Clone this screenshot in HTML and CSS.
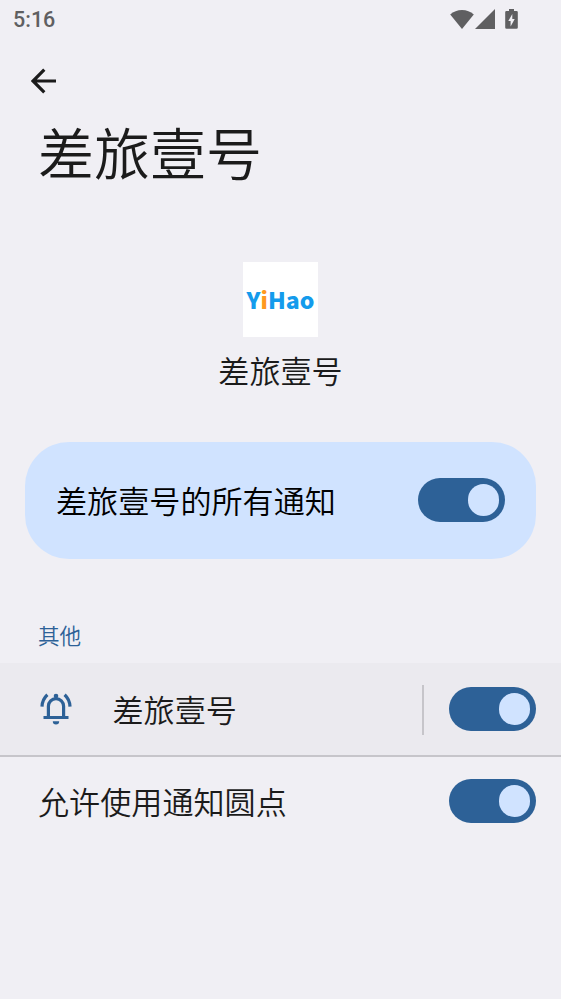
FILE: index.html
```html
<!DOCTYPE html>
<html lang="zh-CN">
<head>
    <meta charset="UTF-8">
    <meta name="viewport" content="width=device-width, initial-scale=1.0">
    <title>差旅壹号</title>
    <link rel="stylesheet" href="styles.css">
</head>
<body>

    <div class="status-bar">
        <span class="clock">5:16</span>
        <div class="status-icons">
            <svg class="wifi" viewBox="0 0 24 19"><path d="M12 19L0.2 4.6C3.4 1.6 7.5 0 12 0s8.600 1.600 11.800 4.600z"/></svg>
            <svg class="signal" viewBox="0 0 20 20"><path d="M0 20L20 0v20z"/></svg>
            <svg class="battery" viewBox="0 0 13 20"><path fill-rule="evenodd" d="M4 0h5v2h2.500a1.300 1.300 0 0 1 1.300 1.300v15.200a1.300 1.300 0 0 1-1.300 1.300h-10a1.300 1.300 0 0 1-1.300-1.300V3.300A1.300 1.300 0 0 1 1.500 2H4zM7.300 5L3.300 12h2.300V17.500l4.100-7.500H7.300z"/></svg>
        </div>
    </div>

    <div class="toolbar">
        <button class="back" aria-label="返回">
            <svg viewBox="0 0 26 26"><path d="M25 13H2.500M13.300 1.700L2 13l11.300 11.300"/></svg>
        </button>
    </div>

    <h1 class="title">差旅壹号</h1>

    <div class="app">
        <div class="app-icon"><span>Y<i>i</i>Hao</span></div>
        <div class="app-name">差旅壹号</div>
    </div>

    <div class="main-switch">
        <span class="label">差旅壹号的所有通知</span>
        <button class="switch" role="switch" aria-checked="true"></button>
    </div>

    <div class="category">其他</div>

    <div class="row channel">
        <svg class="bell" viewBox="0 0 32 32">
            <path class="line" d="M8.400 24V13.200a7.600 7.600 0 0 1 15.200 0V24M3.500 24.500h25"/>
            <path class="line" d="M2 13.600C2.200 9 4.200 4.700 7.400 1.800M30 13.600C29.800 9 27.800 4.700 24.600 1.800"/>
            <circle cx="16" cy="3" r="2.300"/>
            <path d="M12.800 28.200h6.400a3.200 3.200 0 0 1-6.400 0z"/>
        </svg>
        <span class="label">差旅壹号</span>
        <div class="divider"></div>
        <button class="switch" role="switch" aria-checked="true"></button>
    </div>

    <div class="row">
        <span class="label">允许使用通知圆点</span>
        <button class="switch" role="switch" aria-checked="true"></button>
    </div>

</body>
</html>
```

FILE: styles.css
```css
* {
    box-sizing: border-box;
}
body {
    margin: 0;
    min-height: 999px;
    font-family: Roboto, "Noto Sans CJK SC", sans-serif;
    font-size: 31.1px;
    font-weight: 350;
    background-color: #f0eff4;
    color: #1b1b1b;
}
button {
    border: 0;
    padding: 0;
    cursor: pointer;
}
.status-bar {
    display: flex;
    justify-content: space-between;
    align-items: center;
    height: 38px;
    padding: 0 43px 0 13px;
    color: #5f5f61;
}
.clock {
    padding-top: 2px;
    font-size: 21.5px;
    font-weight: 500;
    line-height: 36px;
}
.status-icons {
    display: flex;
    align-items: center;
    fill: #5f5f61;
}
.wifi {
    width: 24px;
    height: 19px;
}
.signal {
    width: 20px;
    height: 20px;
    margin: 0 10.5px 0 1px;
}
.battery {
    width: 13px;
    height: 20px;
}
.toolbar {
    display: flex;
    align-items: center;
    height: 86px;
    padding-left: 31px;
}
.back {
    width: 26px;
    height: 26px;
    background: none;
}
.back svg {
    display: block;
    fill: none;
    stroke: #1b1b1b;
    stroke-width: 3.2;
}
.title {
    margin: 0;
    padding: 2px 0 0 38px;
    font-size: 56px;
    font-weight: 350;
    line-height: 60px;
}
.app {
    display: flex;
    flex-direction: column;
    align-items: center;
    padding-top: 76px;
}
.app-icon {
    display: flex;
    align-items: center;
    justify-content: center;
    width: 75px;
    height: 75px;
    background-color: #ffffff;
    color: #149bec;
    font-family: "Noto Sans CJK SC", sans-serif;
    font-size: 23px;
    font-weight: 900;
    line-height: 75px;
}
.app-icon i {
    font-style: normal;
    color: #ff981f;
}
.app-name {
    margin-top: 16px;
    line-height: 40px;
}
.main-switch {
    display: flex;
    align-items: center;
    height: 117px;
    margin: 49px 25px 0;
    padding: 0 31px 1px;
    border-radius: 44px;
    background-color: #d0e3ff;
    color: #000000;
}
.switch {
    display: flex;
    align-items: center;
    justify-content: flex-end;
    flex: none;
    width: 87.5px;
    height: 44px;
    padding-right: 6px;
    border-radius: 22px;
    background-color: #2d6197;
}
.switch::before {
    content: "";
    width: 31.5px;
    height: 31.5px;
    border-radius: 50%;
    background-color: #d0e3ff;
}
.category {
    height: 104px;
    padding: 63px 38px 0;
    font-size: 21.6px;
    line-height: 30px;
    color: #2d6197;
}
.row {
    display: flex;
    align-items: center;
    height: 88px;
    padding: 0 25px 0 38px;
}
.label {
    flex: 1;
    padding-bottom: 2px;
}
.channel {
    height: 94px;
    background-color: #ebeaef;
    border-bottom: 2px solid #c6c5ca;
}
.bell {
    width: 32px;
    height: 32px;
    margin: 0 40.5px 0 2px;
    fill: #2d6197;
}
.bell .line {
    fill: none;
    stroke: #2d6197;
    stroke-width: 3.2;
}
.divider {
    width: 2px;
    height: 50px;
    margin: 1px 24.5px 0 0;
    background-color: #c6c5ca;
}
```
